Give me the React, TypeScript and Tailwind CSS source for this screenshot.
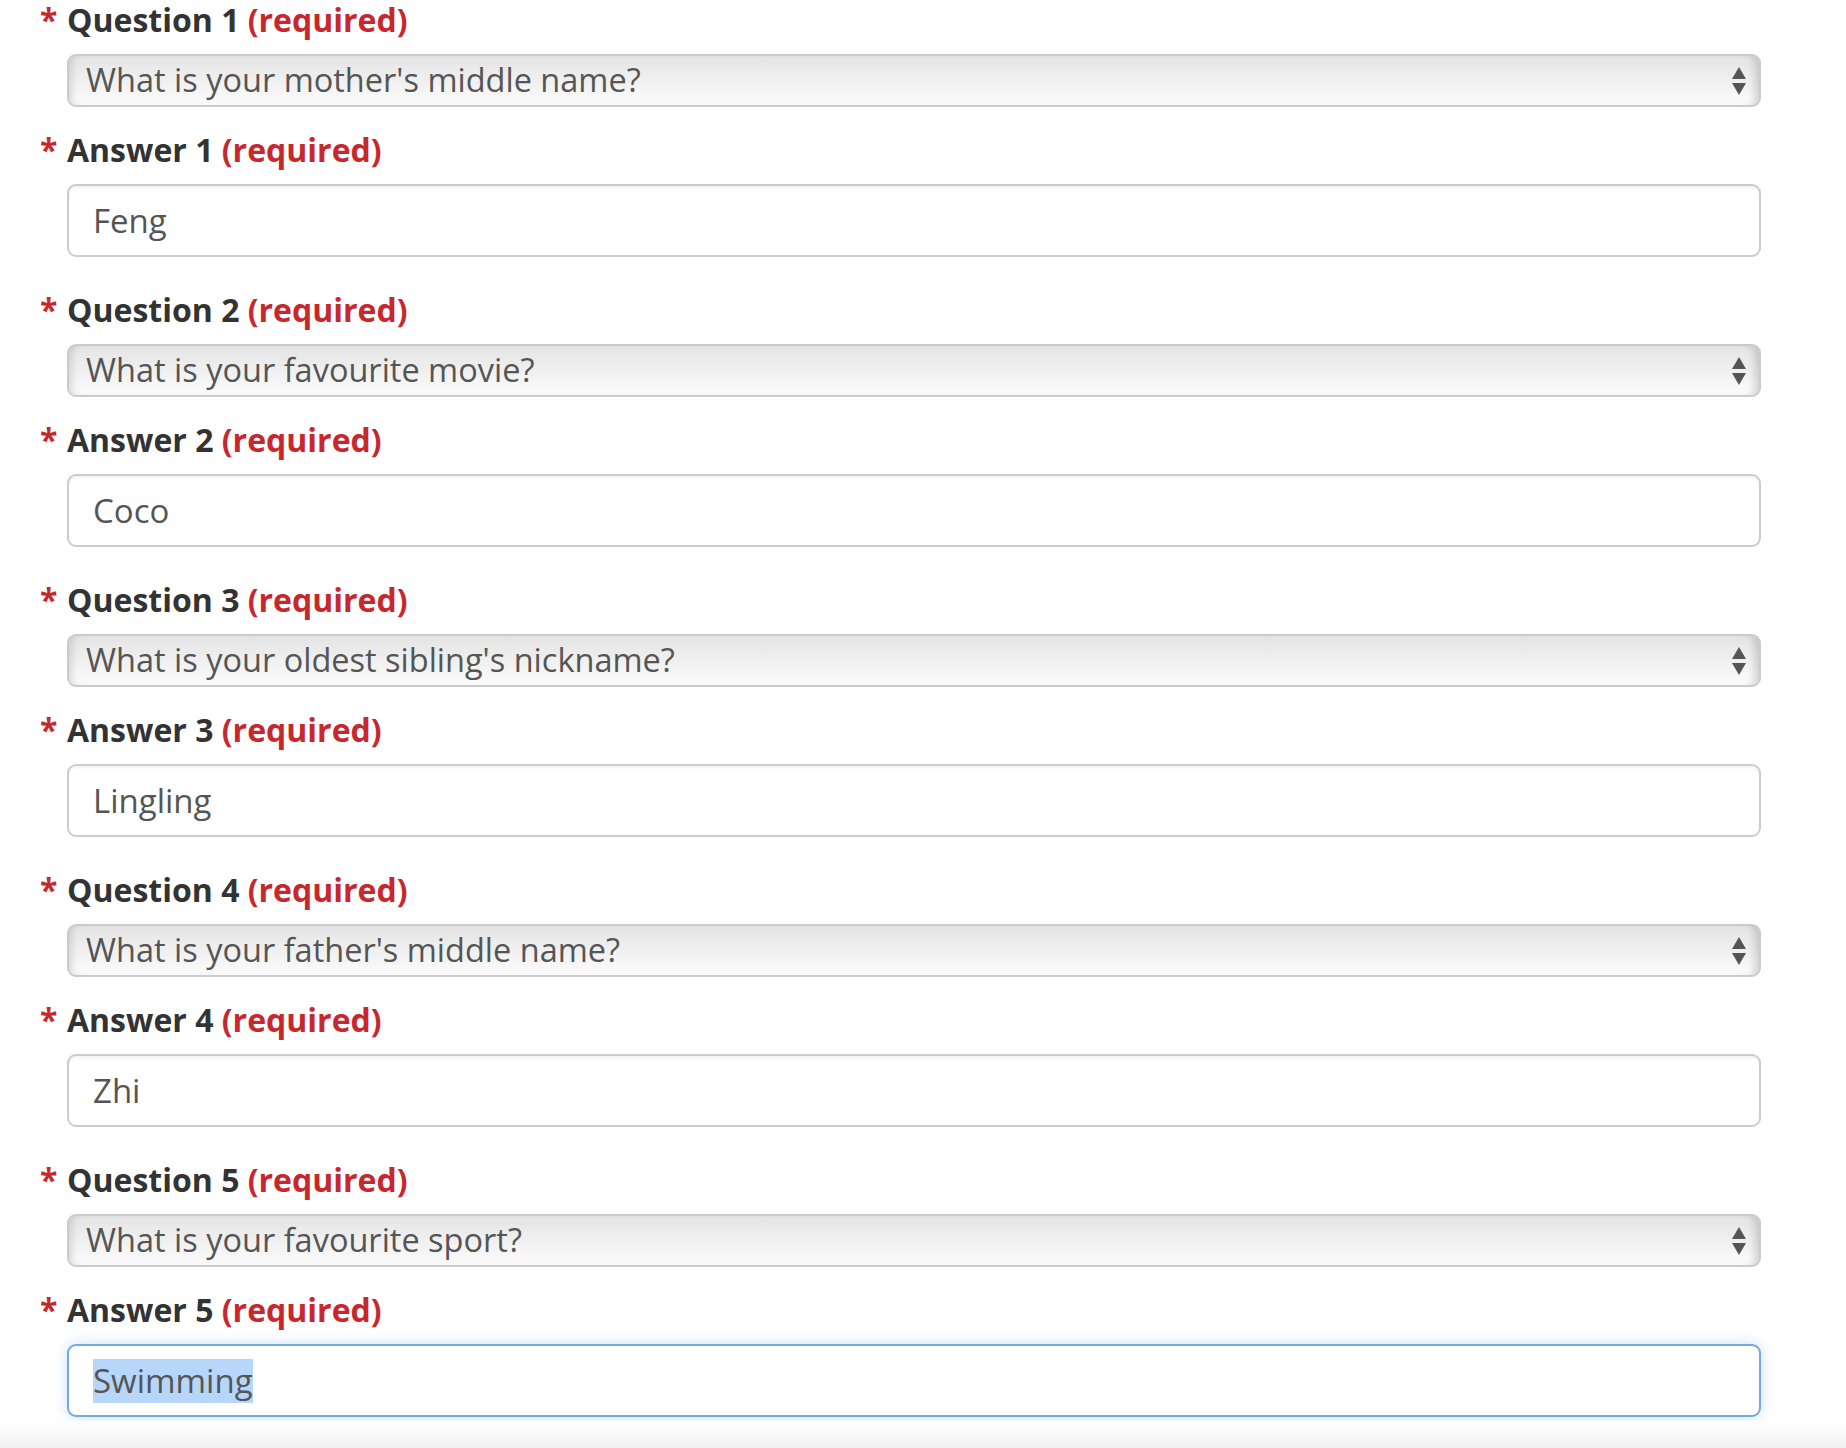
import { useState } from 'react'

const questions = [
    { q: "What is your mother's middle name?", a: 'Feng' },
    { q: 'What is your favourite movie?', a: 'Coco' },
    { q: "What is your oldest sibling's nickname?", a: 'Lingling' },
    { q: "What is your father's middle name?", a: 'Zhi' },
    { q: 'What is your favourite sport?', a: 'Swimming' },
]

function Label({ text }: { text: string }) {
    return (
        <label className="flex h-[40px] items-center text-[32px] leading-[40px] font-bold whitespace-pre text-[#333]">
            <span className="-ml-[27px] w-[27px] text-[#c7282d]">*</span>
            <span>{text} </span>
            <span className="text-[#c7282d]">(required)</span>
        </label>
    )
}

function SelectArrows() {
    return (
        <svg
            className="pointer-events-none absolute top-1/2 right-[14px] -translate-y-1/2"
            width="16"
            height="30"
            viewBox="0 0 16 30"
        >
            <path d="M8 1 L15 13 L1 13 Z" fill="#555" />
            <path d="M1 17 L15 17 L8 29 Z" fill="#555" />
        </svg>
    )
}

export default function App() {
    const [values] = useState(questions)

    return (
        <div className="min-h-[1448px] bg-white font-['Open_Sans',sans-serif]">
            <div className="pr-[85px] pl-[67px]">
                {values.map((item, i) => {
                    const last = i === values.length - 1
                    return (
                        <div key={i} className={last ? '' : 'pb-[33px]'}>
                            <Label text={`Question ${i + 1}`} />
                            <div className="relative mt-[14px]">
                                <select
                                    defaultValue={item.q}
                                    className="h-[53px] w-full appearance-none rounded-[9px] border-2 border-[#cbcbcb] bg-gradient-to-b from-[#e4e4e4] via-[#f0f0f0] to-[#fbfbfb] pl-[17px] text-[32.5px] text-[#555] shadow-[inset_8px_0_8px_-6px_rgba(0,0,0,0.14),inset_-10px_0_8px_-6px_rgba(0,0,0,0.16)] outline-none"
                                >
                                    <option>{item.q}</option>
                                </select>
                                <SelectArrows />
                            </div>
                            <div className="mt-[23px]">
                                <Label text={`Answer ${i + 1}`} />
                            </div>
                            {last ? (
                                <div className="mt-[14px] flex h-[73px] w-full items-center rounded-[9px] border-2 border-[#72a9e2] bg-white pl-[24px] text-[33px] text-[#555] shadow-[0_0_14px_rgba(110,165,225,0.35)]">
                                    <span className="bg-[#b6d6fb] py-[2px] leading-[40px]">{item.a}</span>
                                </div>
                            ) : (
                                <input
                                    readOnly
                                    defaultValue={item.a}
                                    className="mt-[14px] block h-[73px] w-full rounded-[9px] border-2 border-[#cccccc] bg-white pl-[24px] text-[33px] text-[#555] shadow-[inset_0_2px_3px_rgba(0,0,0,0.05)] outline-none"
                                />
                            )}
                        </div>
                    )
                })}
            </div>
            <div className="mt-[4px] h-[27px] bg-gradient-to-b from-white to-[#f2f2f2]" />
        </div>
    )
}
